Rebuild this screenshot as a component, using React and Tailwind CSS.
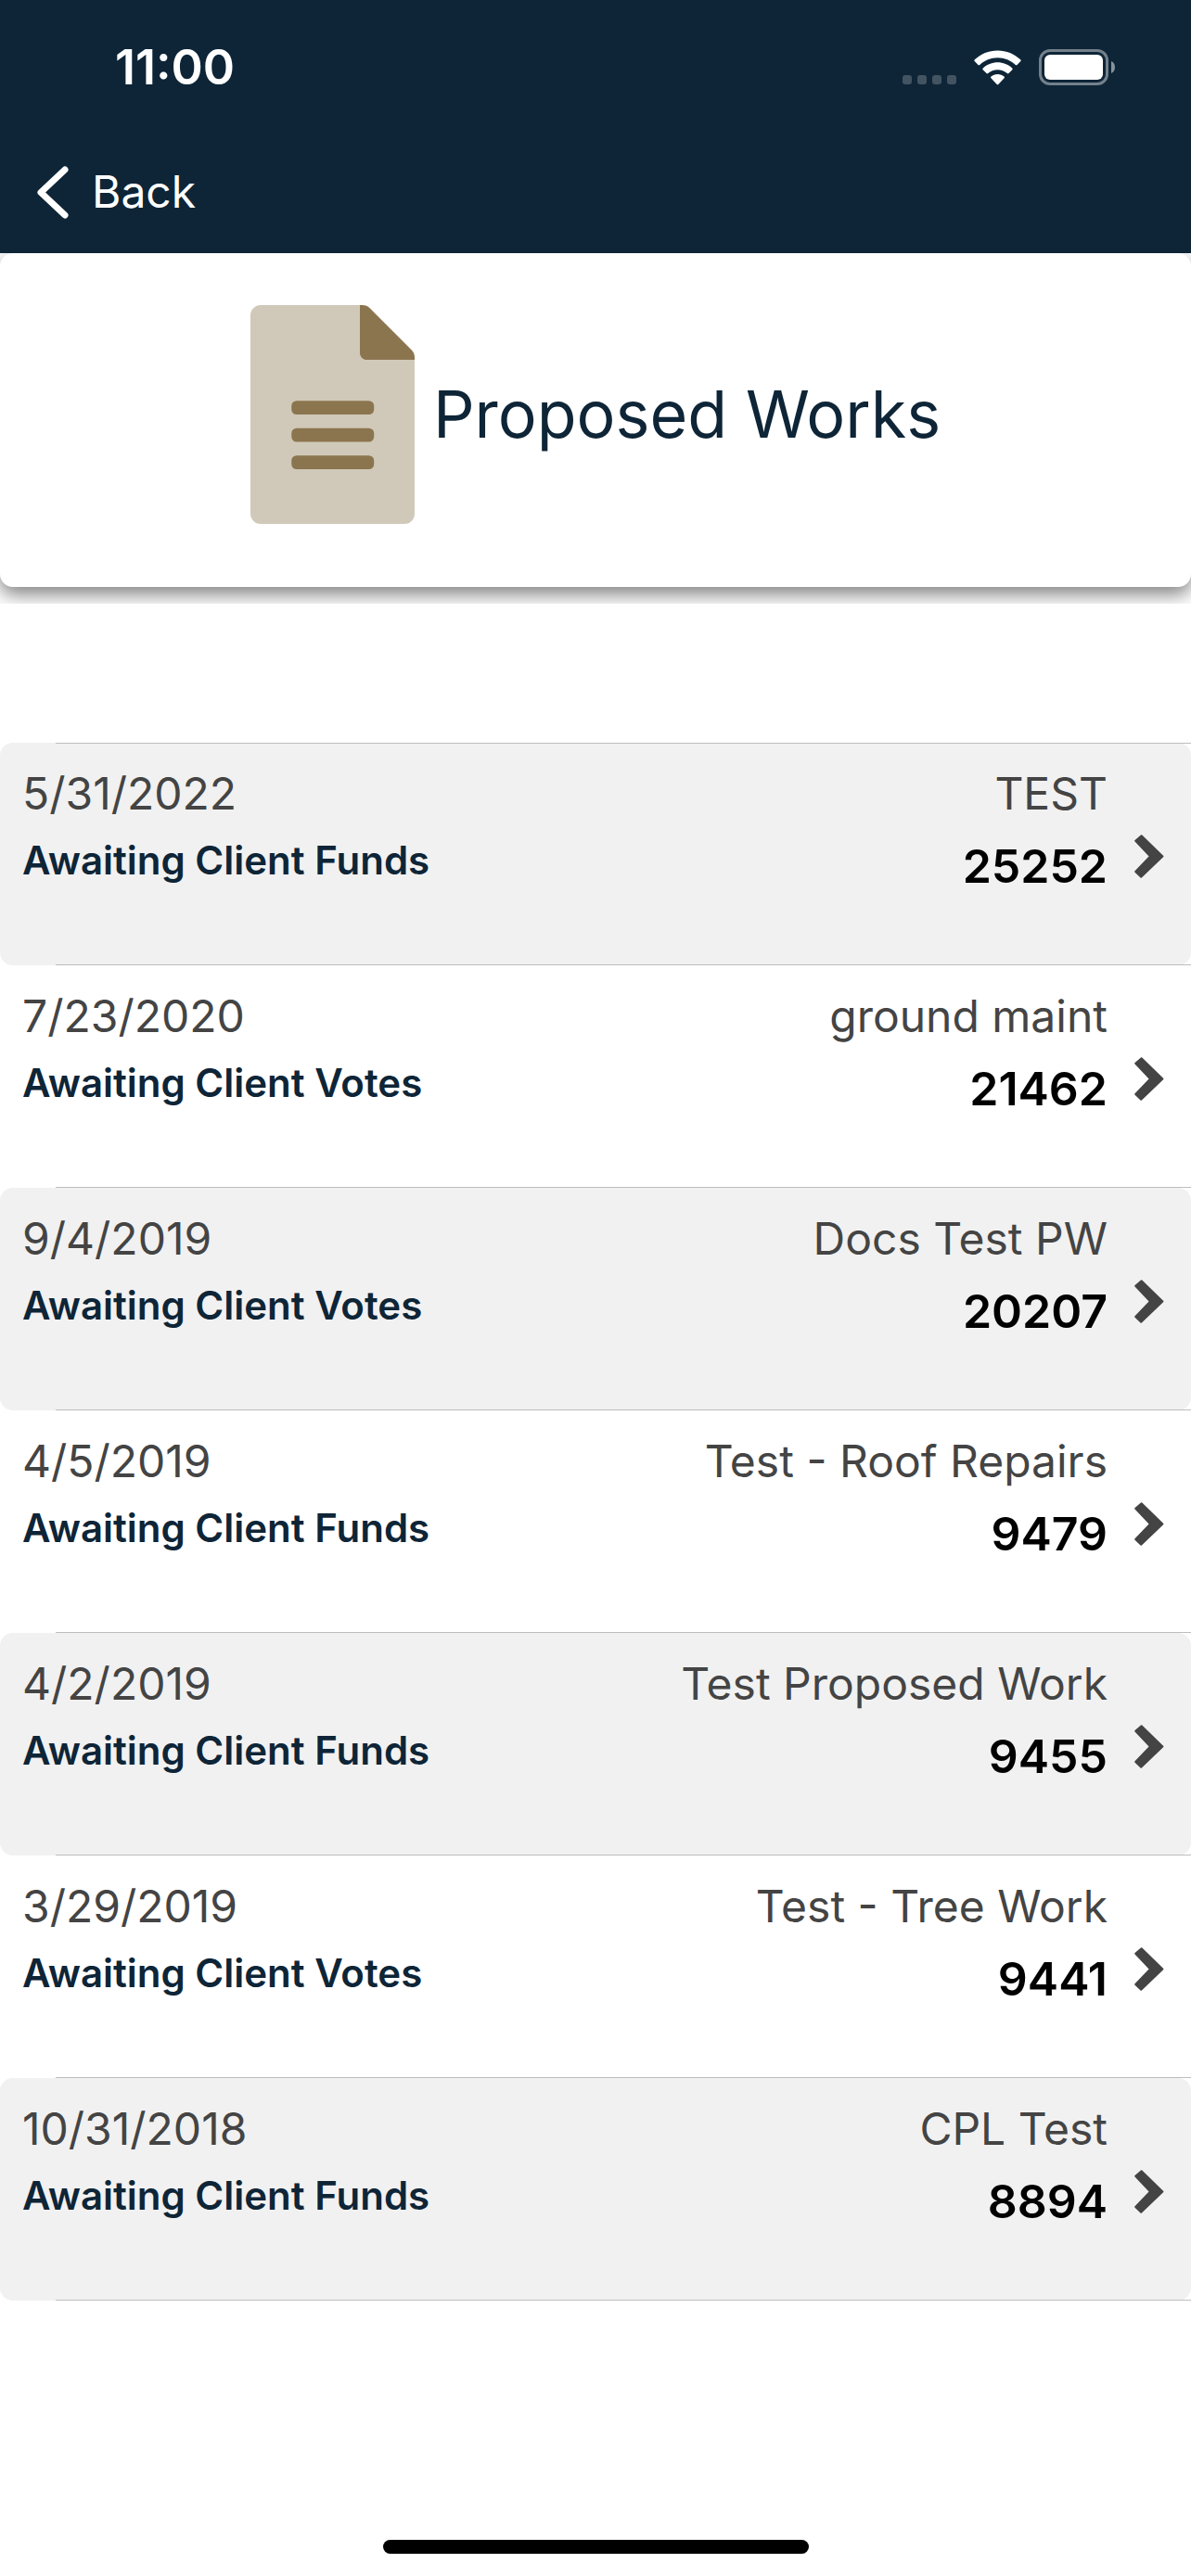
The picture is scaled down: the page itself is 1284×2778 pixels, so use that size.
const works = [
  { id: '25252', date: '5/31/2022', status: 'Awaiting Client Funds', title: 'TEST' },
  { id: '21462', date: '7/23/2020', status: 'Awaiting Client Votes', title: 'ground maint' },
  { id: '20207', date: '9/4/2019', status: 'Awaiting Client Votes', title: 'Docs Test PW' },
  { id: '9479', date: '4/5/2019', status: 'Awaiting Client Funds', title: 'Test - Roof Repairs' },
  { id: '9455', date: '4/2/2019', status: 'Awaiting Client Funds', title: 'Test Proposed Work' },
  { id: '9441', date: '3/29/2019', status: 'Awaiting Client Votes', title: 'Test - Tree Work' },
  { id: '8894', date: '10/31/2018', status: 'Awaiting Client Funds', title: 'CPL Test' },
]

const StatusBar = () => (
  <div className="h-[145px] pl-[124px] pr-[82px] flex items-center justify-between">
    <span className="text-[52px] leading-[60px] font-semibold">11:00</span>
    <div className="flex items-center gap-[19px]">
      <svg width="58" height="38" viewBox="0 0 58 38" fill="#fff" fillOpacity="0.22">
        <rect x="0" y="27" width="10" height="10" rx="3" />
        <rect x="16" y="27" width="10" height="10" rx="3" />
        <rect x="32" y="27" width="10" height="10" rx="3" />
        <rect x="48" y="27" width="10" height="10" rx="3" />
      </svg>
      <svg width="51" height="38" viewBox="0 0 51 38" fill="#fff">
        <path d="M25.5 0.5C35 0.5 43.7 4.2 50.2 10.3C50.8 10.8 50.8 11.6 50.3 12.1L46.5 15.9C46 16.4 45.3 16.4 44.8 15.9C39.7 11.2 33 8.3 25.5 8.3S11.3 11.2 6.2 15.9C5.7 16.4 5 16.4 4.5 15.9L0.7 12.1C0.2 11.6 0.2 10.8 0.8 10.3C7.3 4.2 16 0.5 25.5 0.5Z" />
        <path d="M25.5 13.3C31.5 13.3 37 15.6 41.2 19.4C41.8 19.9 41.8 20.7 41.3 21.2L37.5 25C37 25.5 36.3 25.5 35.8 25C33 22.6 29.4 21.2 25.5 21.2S18 22.6 15.2 25C14.7 25.5 14 25.5 13.5 25L9.7 21.2C9.2 20.7 9.2 19.9 9.8 19.4C14 15.6 19.5 13.3 25.5 13.3Z" />
        <path d="M25.5 26C28.2 26 30.6 26.9 32.5 28.4C33.1 28.9 33.1 29.7 32.6 30.2L26.3 36.9C25.8 37.4 25.2 37.4 24.7 36.9L18.4 30.2C17.9 29.7 17.9 28.9 18.5 28.4C20.4 26.9 22.8 26 25.5 26Z" />
      </svg>
      <svg width="82" height="39" viewBox="0 0 82 39" fill="none">
        <rect x="1.5" y="1.5" width="72" height="36" rx="10.5" stroke="#fff" strokeOpacity="0.42" strokeWidth="3" />
        <rect x="6" y="6" width="63" height="27" rx="6" fill="#fff" />
        <path d="M78 13C80.6 14 82 16.5 82 19.5C82 22.5 80.6 25 78 26Z" fill="#fff" fillOpacity="0.5" />
      </svg>
    </div>
  </div>
)

const DocumentIcon = () => (
  <svg className="shrink-0" width="177" height="236" viewBox="0 0 384 512">
    <path d="M24 0H262L384 122V488C384 501.3 373.3 512 360 512H24C10.7 512 0 501.3 0 488V24C0 10.7 10.7 0 24 0Z" fill="#d0c9b9" />
    <path d="M256 0H262C268.4 0 274.5 2.5 279 7L377 105C381.5 109.5 384 115.6 384 122V128H272C263.2 128 256 120.8 256 112Z" fill="#8b754f" />
    <rect x="96" y="224" width="193" height="32" rx="12" fill="#8b754f" />
    <rect x="96" y="288" width="193" height="32" rx="12" fill="#8b754f" />
    <rect x="96" y="352" width="193" height="32" rx="12" fill="#8b754f" />
  </svg>
)

const RowArrow = () => (
  <svg className="shrink-0 mt-[74px] ml-[29px]" width="32" height="47" viewBox="0 0 32 47" fill="#444" stroke="#444" strokeWidth="2" strokeLinejoin="round">
    <path d="M1.2 6.8L7.6 1.2L30.4 23.5L7.2 45.8L1.2 40L17 23.5Z" />
  </svg>
)

const App = () => {
  return (
    <div className="min-h-screen bg-white flex flex-col font-['Inter',sans-serif]">
      <header className="bg-[#0e2537] text-white">
        <StatusBar />
        <nav className="h-32 pl-10 pb-1 flex items-center">
          <button className="flex items-center gap-[25px]">
            <svg width="34" height="57" viewBox="0 0 34 57" fill="none" stroke="#fff" strokeWidth="7" strokeLinecap="round" strokeLinejoin="round">
              <path d="M30 4L4 28.5L30 53" />
            </svg>
            <span className="text-[48px] leading-[60px]">Back</span>
          </button>
        </nav>
      </header>

      <main>
        <div className="overflow-hidden pb-[18px]">
          <div className="h-[360px] pb-3 flex items-center justify-center gap-5 bg-white rounded-[14px] shadow-[0_8px_20px_rgba(0,0,0,0.5)]">
            <DocumentIcon />
            <h1 className="text-[70px] leading-[92px] text-[#0e2537]">Proposed Works</h1>
          </div>
        </div>

        <div className="relative mt-[150px]">
          <div className="absolute z-10 top-0 left-[60px] right-0 h-px bg-[#bdbdbd]" />
          <ul>
            {works.map((work, i) => (
              <li key={work.id} className="relative">
                <button className={`w-full h-[240px] pl-6 pr-[29px] pt-[25px] flex items-start text-left rounded-[14px] ${i % 2 === 0 ? 'bg-[#f1f1f1]' : 'bg-white'}`}>
                  <span className="flex-1 flex flex-col gap-3">
                    <span className="text-[48px] leading-[60px] text-[#444]">{work.date}</span>
                    <span className="text-[42px] leading-[60px] font-semibold text-[#0e2537]">{work.status}</span>
                  </span>
                  <span className="flex flex-col gap-[18px] text-right">
                    <span className="text-[48px] leading-[60px] text-[#444]">{work.title}</span>
                    <span className="text-[50px] leading-[60px] font-semibold text-black">{work.id}</span>
                  </span>
                  <RowArrow />
                </button>
                <div className="absolute bottom-0 left-[60px] right-0 h-px bg-[#bdbdbd]" />
              </li>
            ))}
          </ul>
        </div>
      </main>

      <div className="mt-auto mb-6 mx-auto w-[459px] h-[15px] rounded-full bg-black" />
    </div>
  )
}

export default App
